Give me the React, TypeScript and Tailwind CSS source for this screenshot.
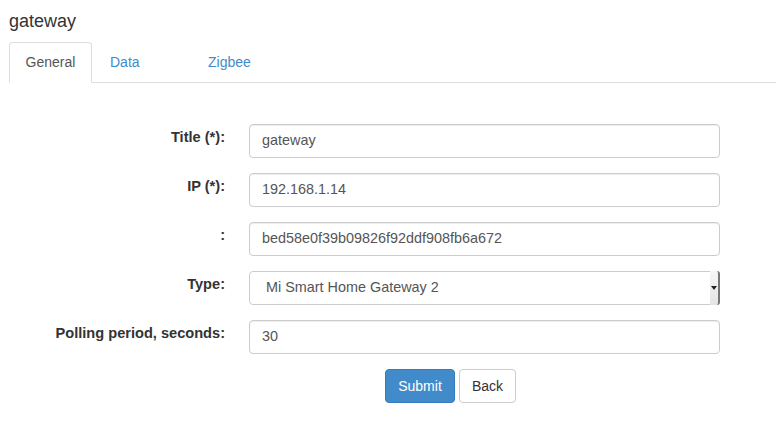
import React from "react";

const font = { fontFamily: '"Liberation Sans", Arial, Helvetica, sans-serif' };

function Row({ label, children }: { label: string; children: React.ReactNode }) {
  return (
    <div className="flex items-start mb-[15px]">
      <label className="w-[216px] shrink-0 text-right font-bold text-[14.6px] leading-[20px] pt-[3px] text-[#333]">
        {label}
      </label>
      <div className="ml-[24px] w-[471px]">{children}</div>
    </div>
  );
}

function Input({ value }: { value: string }) {
  return (
    <div className="h-[34px] w-full border border-[#ccc] rounded-[4px] bg-white px-[12px] flex items-center text-[14.4px] text-[#555] shadow-[inset_0_1px_1px_rgba(0,0,0,0.075)]">
      {value}
    </div>
  );
}

export default function App() {
  return (
    <div className="w-[776px] h-[440px] bg-white text-[#333] pl-[9px]" style={font}>
      <div className="pt-[10px] text-[18px] leading-[22px] h-[42px]">gateway</div>
      <div className="flex border-b border-[#ddd] h-[41px]">
        <div className="h-[41px] w-[83px] border border-[#ddd] border-b-white rounded-t-[4px] bg-white flex items-center justify-center text-[14px] text-[#555] -mb-px">
          General
        </div>
        <div className="ml-[2px] h-[40px] w-[97px] pl-[16px] flex items-center text-[14px] text-[#428bca]">Data</div>
        <div className="ml-[2px] h-[40px] pl-[15px] pr-[15px] flex items-center text-[14px] text-[#428bca]">Zigbee</div>
      </div>
      <div className="pt-[41px]">
        <Row label="Title (*):">
          <Input value="gateway" />
        </Row>
        <Row label="IP (*):">
          <Input value="192.168.1.14" />
        </Row>
        <Row label=":">
          <Input value="bed58e0f39b09826f92ddf908fb6a672" />
        </Row>
        <Row label="Type:">
          <div className="relative h-[34px] w-full border border-[#ccc] rounded-[4px] bg-white pl-[16px] flex items-center text-[14.4px] text-[#555]">
            Mi Smart Home Gateway 2
            <div className="absolute right-[-1px] top-[-1px] h-[34px] w-[10px] bg-gradient-to-b from-[#f6f6f6] to-[#e4e4e4] border-r-2 border-[#777] rounded-r-[3px] flex items-center justify-center">
              <svg width="6" height="4" viewBox="0 0 6 4"><path d="M0 0 L6 0 L3 4 Z" fill="#222" /></svg>
            </div>
          </div>
        </Row>
        <Row label="Polling period, seconds:">
          <Input value="30" />
        </Row>
        <div className="flex pl-[376px] gap-[4px]">
          <button className="h-[34px] w-[70px] rounded-[4px] bg-[#428bca] border border-[#357ebd] text-white text-[14px]">Submit</button>
          <button className="h-[34px] w-[57px] rounded-[4px] bg-white border border-[#ccc] text-[#333] text-[14px]">Back</button>
        </div>
      </div>
    </div>
  );
}
